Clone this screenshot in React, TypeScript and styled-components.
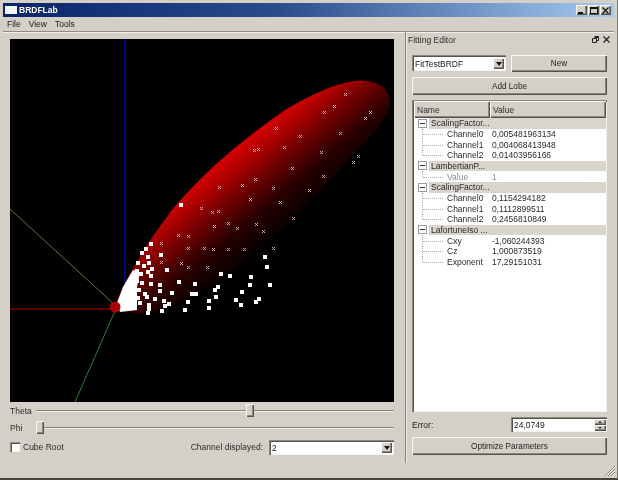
import styled, { createGlobalStyle } from "styled-components";

const GlobalStyle = createGlobalStyle`
  html, body {
    margin: 0;
    padding: 0;
    background: #d4d0c8;
  }
  body {
    font-family: "Liberation Sans", Arial, sans-serif;
    font-size: 8.5px;
    color: #1a1a1a;
  }
  * { box-sizing: border-box; }
`;

const raised = `
  background: #d4d0c8;
  box-shadow: inset 1px 1px 0 #f8f8f4, inset -1px -1px 0 #55534f, inset -2px -2px 0 #8a8880;
`;
const sunken = `
  box-shadow: inset 1px 1px 0 #8a8880, inset 2px 2px 0 #55534f, inset -1px -1px 0 #f4f2ee;
`;

const Window = styled.div`
  position: relative;
  width: 618px;
  height: 480px;
  padding: 3px 3px 2px 3px;
  background: #d4d0c8;
  display: flex;
  flex-direction: column;
  overflow: hidden;
  border-bottom: 2px solid #45443f;
  border-right: 1px solid #77766f;
  filter: blur(0.3px);
`;

const TitleBar = styled.div`
  height: 14px;
  flex: none;
  display: flex;
  align-items: center;
  padding: 0 3px 0 2px;
  background: linear-gradient(90deg, #0a246a 0%, #2a4c8c 45%, #a6caf0 100%);
`;

const AppIcon = styled.span`
  width: 12px;
  height: 8px;
  margin-right: 2px;
  background: #f2f6fb;
  flex: none;
`;

const TitleText = styled.span`
  color: #ffffff;
  font-weight: bold;
  font-size: 8.5px;
  flex: 1;
`;

const WinButtons = styled.div`
  display: flex;
  gap: 1px;
`;

const WinButton = styled.span`
  ${raised}
  width: 11px;
  height: 10px;
  display: flex;
  align-items: center;
  justify-content: center;
`;

const MenuBar = styled.div`
  height: 15px;
  flex: none;
  display: flex;
  align-items: center;
  gap: 8px;
  padding: 0 4px;
  border-bottom: 1px solid #8e8c85;
  box-shadow: 0 1px 0 #f2f0ea;
`;

const Body = styled.div`
  flex: 1;
  min-height: 0;
  display: flex;
`;

const MainPane = styled.div`
  width: 402px;
  flex: none;
  padding: 7px 11px 0 7px;
  display: flex;
  flex-direction: column;
`;

const Viewport = styled.div`
  width: 384px;
  height: 363px;
  background: #000000;
  flex: none;
  overflow: hidden;
  svg { display: block; }
`;

const SliderRow = styled.div`
  height: 17px;
  flex: none;
  display: flex;
  align-items: center;
`;

const SliderLabel = styled.span`
  width: 26px;
  flex: none;
  color: #2a2a2a;
`;

const Track = styled.div`
  position: relative;
  flex: 1;
  height: 2px;
  background: #85837c;
  border-bottom: 1px solid #f0eee8;
`;

const Handle = styled.span<{ $left: number }>`
  ${raised}
  position: absolute;
  left: ${(p) => p.$left}px;
  top: -6px;
  width: 8px;
  height: 13px;
`;

const OptionsRow = styled.div`
  height: 20px;
  flex: none;
  display: flex;
  align-items: center;
  margin-top: 1px;
`;

const CheckBox = styled.span`
  ${sunken}
  width: 10px;
  height: 10px;
  background: #ffffff;
  margin-right: 3px;
  flex: none;
`;

const CheckLabel = styled.span`
  flex: 1;
  color: #2a2a2a;
`;

const ComboLabel = styled.span`
  margin-right: 6px;
  color: #2a2a2a;
`;

const Combo = styled.div<{ $width: number; $height: number }>`
  ${sunken}
  width: ${(p) => p.$width}px;
  height: ${(p) => p.$height}px;
  background: #ffffff;
  display: flex;
  align-items: center;
  justify-content: space-between;
  padding: 2px 2px 1px 3px;
`;

const ComboArrow = styled.span`
  ${raised}
  width: 11px;
  height: 11px;
  display: flex;
  align-items: center;
  justify-content: center;
  &::after {
    content: "";
    border-left: 3px solid transparent;
    border-right: 3px solid transparent;
    border-top: 4px solid #111;
  }
`;

const Dock = styled.div`
  flex: 1;
  height: 431px;
  padding: 0 7px 0 6px;
  border-left: 1px solid #85837c;
  box-shadow: inset 1px 0 0 #f0eee8;
  display: flex;
  flex-direction: column;
`;

const DockTitle = styled.div`
  height: 15px;
  flex: none;
  margin: 0 -5px 1px -4px;
  display: flex;
  align-items: center;
  justify-content: space-between;
  color: #2a2a2a;
  svg { margin-left: 4px; }
`;

const DockIcons = styled.div`
  display: flex;
  align-items: center;
  padding-right: 2px;
`;

const ComboRow = styled.div`
  display: flex;
  align-items: flex-start;
  justify-content: space-between;
  margin-top: 7px;
  height: 17px;
  flex: none;
`;

const Button = styled.div<{ $width?: number; $height?: number }>`
  ${raised}
  width: ${(p) => (p.$width ? `${p.$width}px` : "100%")};
  height: ${(p) => p.$height ?? 18}px;
  flex: none;
  display: flex;
  align-items: center;
  justify-content: center;
  color: #222;
  font-size: 8.2px;
`;

const AddLobeWrap = styled.div`
  margin-top: 5px;
  flex: none;
`;

const Tree = styled.div`
  ${sunken}
  margin-top: 5px;
  height: 312px;
  flex: none;
  background: #ffffff;
  padding: 1px 1px 1px 2px;
  display: flex;
  flex-direction: column;
`;

const TreeHeader = styled.div`
  height: 17px;
  flex: none;
  display: grid;
  grid-template-columns: 76px 1fr;
`;

const HeaderCell = styled.div`
  ${raised}
  display: flex;
  align-items: center;
  padding-left: 3px;
  color: #2a2a2a;
`;

const SectionRow = styled.div`
  height: 10.67px;
  flex: none;
  display: flex;
  align-items: center;
`;

const Expander = styled.span`
  width: 15px;
  flex: none;
  display: flex;
  justify-content: center;
  padding-left: 2px;
`;

const SectionLabel = styled.span`
  flex: 1;
  height: 100%;
  background: #d8d5cd;
  padding-left: 2px;
  display: flex;
  align-items: center;
  color: #2a2a2a;
`;

const ChildRow = styled.div`
  height: 10.67px;
  flex: none;
  display: grid;
  grid-template-columns: 76px 1fr;
  align-items: center;
`;

const ChildName = styled.span<{ $muted?: boolean }>`
  display: flex;
  align-items: center;
  height: 100%;
  color: ${(p) => (p.$muted ? "#8b8b8b" : "#2a2a2a")};
`;

const Guide = styled.span<{ $last?: boolean }>`
  position: relative;
  width: 24px;
  height: 100%;
  margin-left: 8px;
  margin-right: 1px;
  flex: none;
  &::before {
    content: "";
    position: absolute;
    left: 0;
    top: 0;
    height: ${(p) => (p.$last ? "50%" : "100%")};
    border-left: 1px dotted #b0b0b0;
  }
  &::after {
    content: "";
    position: absolute;
    left: 1px;
    right: 3px;
    top: 50%;
    border-top: 1px dotted #b0b0b0;
  }
`;

const ChildValue = styled.span<{ $muted?: boolean }>`
  padding-left: 2px;
  color: ${(p) => (p.$muted ? "#8b8b8b" : "#2a2a2a")};
`;

const ErrorRow = styled.div`
  height: 15px;
  margin-top: 5px;
  flex: none;
  display: flex;
  align-items: center;
  justify-content: space-between;
`;

const SpinBox = styled.div`
  ${sunken}
  width: 96px;
  height: 15px;
  background: #ffffff;
  display: flex;
  align-items: center;
  justify-content: space-between;
  padding: 2px 1px 1px 3px;
`;

const SpinButtons = styled.div`
  width: 12px;
  height: 12px;
  display: flex;
  flex-direction: column;
`;

const SpinButton = styled.span<{ $down?: boolean }>`
  ${raised}
  height: 6px;
  flex: none;
  display: flex;
  align-items: center;
  justify-content: center;
  &::after {
    content: "";
    border-left: 2px solid transparent;
    border-right: 2px solid transparent;
    ${(p) => (p.$down ? "border-top: 2px solid #333;" : "border-bottom: 2px solid #333;")}
  }
`;

const OptimizeWrap = styled.div`
  margin-top: 5px;
  flex: none;
`;

const ResizeGrip = styled.svg`
  position: absolute;
  right: 1px;
  bottom: 1px;
`;

const LOBE =
  "M103 270 C113 245 135 205 160 174 C180 150 200 130 223 111 C245 93 260 82 273 73 C295 59 308 54 320 49 C335 44 345 42 353 42 C365 41 378 48 380 61 C381 72 370 88 350 108 C320 140 290 175 255 205 C215 240 170 270 130 275 Z";
const RIM =
  "M160 174 C180 150 200 130 223 111 C245 93 260 82 273 73 C295 59 308 54 320 49 C335 44 345 42 353 42";

// white points, coords relative to viewport
const SQUARES: [number, number][] = [
  [253, 216], [255, 226], [209, 233], [239, 236], [258, 244], [238, 244], [230, 251], [206, 246],
  [203, 249], [204, 256], [224, 259], [247, 258], [244, 261], [229, 264], [197, 260], [197, 267],
  [184, 253], [180, 253], [183, 243], [167, 241], [160, 252], [148, 250], [148, 244], [139, 243],
  [143, 258], [152, 260], [157, 263], [153, 265], [150, 270], [176, 261], [173, 269], [137, 264],
  [137, 268], [136, 272], [126, 257], [133, 253], [135, 256], [127, 249], [129, 233], [139, 235],
  [136, 231], [155, 229], [149, 214], [139, 203], [136, 216], [137, 222], [169, 164], [218, 235],
  [125, 240], [122, 246], [128, 262], [130, 242], [140, 228], [132, 225], [125, 230], [130, 212],
  [134, 208], [126, 222],
];

const FAINT: [number, number][] = [
  [334, 54], [323, 66], [313, 72], [359, 72], [354, 78], [329, 93], [289, 96], [273, 107],
  [310, 112], [243, 110], [247, 109], [347, 116], [342, 122], [281, 128], [312, 136], [244, 139],
  [231, 145], [208, 147], [262, 148], [298, 150], [239, 159], [269, 162], [190, 168], [201, 172],
  [207, 171], [282, 178], [265, 88], [217, 183], [203, 186], [245, 184], [226, 188], [252, 191],
  [177, 196], [167, 195], [150, 203], [177, 208], [193, 208], [202, 209], [217, 209], [233, 209],
  [262, 208], [170, 223], [150, 222], [177, 227], [196, 227],
];

function Scene() {
  return (
    <svg width="384" height="363" viewBox="0 0 384 363">
      <defs>
        <linearGradient id="lobe" gradientUnits="userSpaceOnUse" x1="220" y1="111" x2="284" y2="188">
          <stop offset="0" stopColor="#d80000" />
          <stop offset="0.12" stopColor="#c00000" />
          <stop offset="0.4" stopColor="#700000" />
          <stop offset="0.65" stopColor="#2c0000" />
          <stop offset="1" stopColor="#000000" />
        </linearGradient>
        <filter id="soft">
          <feGaussianBlur stdDeviation="0.7" />
        </filter>
      </defs>
      <line x1="115" y1="0" x2="115" y2="268" stroke="#000080" strokeWidth="2" />
      <line x1="0" y1="270" x2="105" y2="270" stroke="#7a0000" strokeWidth="1.5" />
      <line x1="0" y1="170" x2="105" y2="266" stroke="#6e6e38" strokeWidth="1" />
      <line x1="105" y1="272" x2="65" y2="363" stroke="#2f7a3a" strokeWidth="1" />
      <path d={LOBE} fill="url(#lobe)" filter="url(#soft)" />
      <path d={RIM} fill="none" stroke="#e80000" strokeWidth="1.5" opacity="0.6" filter="url(#soft)" />
      <path d="M107 264 L113 248 L123 231 L130 233 L127 248 L127 271 L110 273 Z" fill="#ffffff" />
      {SQUARES.map(([x, y], i) => (
        <rect key={i} x={x} y={y} width="4" height="4" fill="#ffffff" />
      ))}
      {FAINT.map(([x, y], i) => (
        <path
          key={i}
          d={`M${x} ${y} l3 3 M${x + 3} ${y} l-3 3`}
          stroke="#f6d0d0"
          strokeWidth="1"
          opacity="0.8"
        />
      ))}
      <circle cx="105" cy="268" r="5.5" fill="#a80000" filter="url(#soft)" />
    </svg>
  );
}

function Minus() {
  return (
    <svg width="9" height="9" viewBox="0 0 9 9">
      <rect x="0.5" y="0.5" width="8" height="8" fill="#fff" stroke="#9a9a9a" />
      <line x1="2" y1="4.5" x2="7" y2="4.5" stroke="#333" />
    </svg>
  );
}

type Child = { name: string; value: string; muted?: boolean };
type Section = { label: string; children: Child[] };

const SECTIONS: Section[] = [
  {
    label: "ScalingFactor...",
    children: [
      { name: "Channel0", value: "0,005481963134" },
      { name: "Channel1", value: "0,004068413948" },
      { name: "Channel2", value: "0,01403956166" },
    ],
  },
  { label: "LambertianP...", children: [{ name: "Value", value: "1", muted: true }] },
  {
    label: "ScalingFactor...",
    children: [
      { name: "Channel0", value: "0,1154294182" },
      { name: "Channel1", value: "0,1112899511" },
      { name: "Channel2", value: "0,2456810849" },
    ],
  },
  {
    label: "LafortuneIso ...",
    children: [
      { name: "Cxy", value: "-1,060244393" },
      { name: "Cz", value: "1,000873519" },
      { name: "Exponent", value: "17,29151031" },
    ],
  },
];

export default function App() {
  return (
    <Window>
      <GlobalStyle />
      <TitleBar>
        <AppIcon />
        <TitleText>BRDFLab</TitleText>
        <WinButtons>
          <WinButton>
            <svg width="7" height="7" viewBox="0 0 7 7">
              <rect x="0" y="5" width="5" height="2" fill="#111" />
            </svg>
          </WinButton>
          <WinButton>
            <svg width="8" height="7" viewBox="0 0 8 7">
              <rect x="0.5" y="0.5" width="7" height="6" fill="none" stroke="#111" />
              <line x1="0" y1="1.5" x2="8" y2="1.5" stroke="#111" />
            </svg>
          </WinButton>
          <WinButton>
            <svg width="7" height="7" viewBox="0 0 7 7">
              <path d="M0.5 0.5 L6.5 6.5 M6.5 0.5 L0.5 6.5" stroke="#111" strokeWidth="1.3" />
            </svg>
          </WinButton>
        </WinButtons>
      </TitleBar>
      <MenuBar>
        <span>File</span>
        <span>View</span>
        <span>Tools</span>
      </MenuBar>
      <Body>
        <MainPane>
          <Viewport>
            <Scene />
          </Viewport>
          <SliderRow>
            <SliderLabel>Theta</SliderLabel>
            <Track>
              <Handle $left={210} />
            </Track>
          </SliderRow>
          <SliderRow>
            <SliderLabel>Phi</SliderLabel>
            <Track>
              <Handle $left={0} />
            </Track>
          </SliderRow>
          <OptionsRow>
            <CheckBox />
            <CheckLabel>Cube Root</CheckLabel>
            <ComboLabel>Channel displayed:</ComboLabel>
            <Combo $width={125} $height={15}>
              <span>2</span>
              <ComboArrow />
            </Combo>
          </OptionsRow>
        </MainPane>
        <Dock>
          <DockTitle>
            <span>Fitting Editor</span>
            <DockIcons>
              <svg width="7" height="7" viewBox="0 0 7 7">
                <path d="M2.5 0.5 H6.5 V4.5 H4.5 M0.5 2.5 H4.5 V6.5 H0.5 Z M2.5 1.5 H6.5" fill="none" stroke="#222" />
              </svg>
              <svg width="7" height="7" viewBox="0 0 7 7">
                <path d="M0.5 0.5 L6.5 6.5 M6.5 0.5 L0.5 6.5" stroke="#222" strokeWidth="1.2" />
              </svg>
            </DockIcons>
          </DockTitle>
          <ComboRow>
            <Combo $width={94} $height={16}>
              <span>FitTestBRDF</span>
              <ComboArrow />
            </Combo>
            <Button $width={96} $height={17}>New</Button>
          </ComboRow>
          <AddLobeWrap>
            <Button>Add Lobe</Button>
          </AddLobeWrap>
          <Tree>
            <TreeHeader>
              <HeaderCell>Name</HeaderCell>
              <HeaderCell>Value</HeaderCell>
            </TreeHeader>
            {SECTIONS.map((section, s) => (
              <div key={s}>
                <SectionRow>
                  <Expander>
                    <Minus />
                  </Expander>
                  <SectionLabel>{section.label}</SectionLabel>
                </SectionRow>
                {section.children.map((child, c) => (
                  <ChildRow key={c}>
                    <ChildName $muted={child.muted}>
                      <Guide $last={c === section.children.length - 1} />
                      {child.name}
                    </ChildName>
                    <ChildValue $muted={child.muted}>{child.value}</ChildValue>
                  </ChildRow>
                ))}
              </div>
            ))}
          </Tree>
          <ErrorRow>
            <span>Error:</span>
            <SpinBox>
              <span>24,0749</span>
              <SpinButtons>
                <SpinButton />
                <SpinButton $down />
              </SpinButtons>
            </SpinBox>
          </ErrorRow>
          <OptimizeWrap>
            <Button>Optimize Parameters</Button>
          </OptimizeWrap>
        </Dock>
      </Body>
      <ResizeGrip width="13" height="13" viewBox="0 0 13 13">
        <path d="M12 2 L2 12 M12 5 L5 12 M12 8 L8 12" stroke="#85837c" fill="none" />
        <path d="M12 3 L3 12 M12 6 L6 12 M12 9 L9 12" stroke="#f4f2ee" fill="none" />
      </ResizeGrip>
    </Window>
  );
}
